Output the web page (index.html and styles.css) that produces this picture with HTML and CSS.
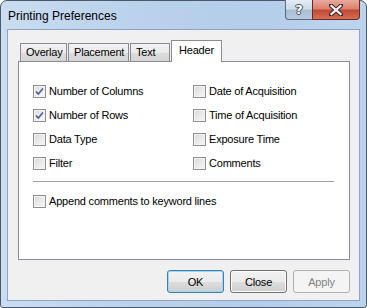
FILE: index.html
```html
<!DOCTYPE html>
<html lang="en">
<head>
    <meta charset="UTF-8">
    <title>Printing Preferences</title>
    <link rel="stylesheet" href="styles.css">
</head>
<body>
    <div class="window">
        <div class="titlebar">
            <span class="title">Printing Preferences</span>
            <div class="caption-buttons">
                <span class="cap-btn help">?</span>
                <span class="cap-btn close">
                    <svg width="14" height="12" viewBox="0 0 14 12">
                        <path d="M2 1.5 L12 10.5 M12 1.5 L2 10.5" stroke="#3a2a2a" stroke-width="4.2" stroke-linecap="square"/>
                        <path d="M2.5 2 L11.5 10 M11.5 2 L2.5 10" stroke="#ffffff" stroke-width="2.2" stroke-linecap="square"/>
                    </svg>
                </span>
            </div>
        </div>

        <div class="client">
            <div class="tabs">
                <div class="tab tab-overlay">Overlay</div>
                <div class="tab tab-placement">Placement</div>
                <div class="tab tab-text">Text</div>
                <div class="tab tab-header active">Header</div>
            </div>

            <div class="panel">
                <div class="options">
                    <label class="check checked"><span class="box"></span>Number of Columns</label>
                    <label class="check"><span class="box"></span>Date of Acquisition</label>
                    <label class="check checked"><span class="box"></span>Number of Rows</label>
                    <label class="check"><span class="box"></span>Time of Acquisition</label>
                    <label class="check"><span class="box"></span>Data Type</label>
                    <label class="check"><span class="box"></span>Exposure Time</label>
                    <label class="check"><span class="box"></span>Filter</label>
                    <label class="check"><span class="box"></span>Comments</label>
                </div>
                <div class="separator"></div>
                <label class="check append"><span class="box"></span>Append comments to keyword lines</label>
            </div>

            <div class="buttons">
                <button class="btn default">OK</button>
                <button class="btn">Close</button>
                <button class="btn disabled">Apply</button>
            </div>
        </div>
    </div>
</body>
</html>
```

FILE: styles.css
```css
:root {
    --client: #f0f0f0;
    --tab-border: #898c95;
    --text: #000000;
}

* {
    margin: 0;
    padding: 0;
    box-sizing: border-box;
}

body {
    width: 367px;
    height: 308px;
    background: #ffffff;
    font-family: 'Liberation Sans', Arial, sans-serif;
    font-size: 11px;
    letter-spacing: -0.2px;
    color: var(--text);
}

.window {
    width: 367px;
    height: 308px;
    border: 1px solid #4a5868;
    border-radius: 7px 7px 3px 3px;
    padding: 0 6px 6px;
    background: linear-gradient(90deg, #c9dcf1 0%, #b9d1ec 40%, #b4cdea 70%, #bdd4ee 100%);
    display: flex;
    flex-direction: column;
}

/* title bar */
.titlebar {
    height: 28px;
    display: flex;
    justify-content: space-between;
    align-items: flex-start;
}

.title {
    font-size: 12px;
    letter-spacing: 0;
    padding: 8px 0 0 1px;
    color: #000000;
}

.caption-buttons {
    display: flex;
    margin-top: -1px;
}

.cap-btn {
    height: 20px;
    display: flex;
    align-items: center;
    justify-content: center;
    border: 1px solid #5a6a80;
    border-top: none;
}

.help {
    width: 27px;
    border-right: none;
    border-radius: 0 0 0 4px;
    background: linear-gradient(180deg, #e4ecf6 0%, #cfdbea 45%, #a9bcd3 55%, #b9cadd 100%);
    font-family: 'DejaVu Sans', sans-serif;
    font-weight: bold;
    font-size: 13px;
    color: #ffffff;
    text-shadow: 0 0 1px #33404f, 1px 0 0 #4a5868, -1px 0 0 #4a5868, 0 1px 0 #4a5868, 0 -1px 0 #4a5868;
}

.close {
    width: 48px;
    border-radius: 0 0 4px 0;
    border-color: #6b2a22;
    background: linear-gradient(180deg, #e9a99c 0%, #d9826f 45%, #c24a32 55%, #d46f58 100%);
}

/* client area */
.client {
    flex: 1;
    border: 1px solid #8ca4c2;
    background: var(--client);
    padding: 10px 8px 0 10px;
    display: flex;
    flex-direction: column;
}

.tabs {
    height: 21px;
    display: flex;
    align-items: flex-end;
    padding-left: 2px;
    gap: 1px;
}

.tab {
    height: 18px;
    border: 1px solid var(--tab-border);
    border-bottom: none;
    background: linear-gradient(180deg, #f2f2f2 0%, #ebebeb 50%, #dddddd 51%, #d4d4d4 100%);
    padding: 2px 0 0 5px;
}

.tab-overlay { width: 47px; }
.tab-placement { width: 61px; }
.tab-text { width: 40px; }

.tab.active {
    width: 51px;
    height: 22px;
    margin-bottom: -1px;
    background: #ffffff;
    position: relative;
    z-index: 1;
    padding: 3px 0 0 7px;
}

.panel {
    width: 332px;
    height: 199px;
    border: 1px solid var(--tab-border);
    background: #ffffff;
    padding: 17px 15px 0 14px;
}

.options {
    display: grid;
    grid-template-columns: 160px 1fr;
    grid-auto-rows: 24px;
}

.check {
    display: flex;
    align-items: center;
    height: 24px;
}

.box {
    width: 13px;
    height: 13px;
    margin-right: 3px;
    border: 1px solid #8e8f8f;
    background: linear-gradient(135deg, #d8d8d8 0%, #e9e9e9 50%, #f8f8f8 100%);
    box-shadow: inset 0 0 0 1px #f4f4f4;
    flex-shrink: 0;
}

.check.checked .box {
    background:
        url("data:image/svg+xml,%3Csvg xmlns='http://www.w3.org/2000/svg' width='11' height='11' viewBox='0 0 11 11'%3E%3Cpath d='M2 5.5 L4.3 8 L9 2.5' fill='none' stroke='%234d6394' stroke-width='1.7'/%3E%3C/svg%3E") no-repeat center,
        linear-gradient(135deg, #dcdcdc 0%, #ececec 50%, #fafafa 100%);
}

.separator {
    width: 301px;
    height: 1px;
    margin-top: 6px;
    background: #a0a0a0;
}

.append {
    margin-top: 7px;
}

/* dialog buttons */
.buttons {
    display: flex;
    justify-content: flex-end;
    gap: 6px;
    margin-top: 10px;
    padding-right: 1px;
}

.btn {
    width: 57px;
    height: 23px;
    font-family: 'Liberation Sans', Arial, sans-serif;
    font-size: 11px;
    letter-spacing: -0.2px;
    color: #000000;
    border: 1px solid #707070;
    border-radius: 3px;
    background: linear-gradient(180deg, #f2f2f2 0%, #ebebeb 50%, #dddddd 51%, #cfcfcf 100%);
    box-shadow: inset 0 0 0 1px #fcfcfc;
}

.btn.default {
    border-color: #3c7fb1;
    box-shadow: inset 0 0 0 1px #9fd8f5;
}

.btn.disabled {
    border-color: #adb2b5;
    background: #f4f4f4;
    box-shadow: none;
    color: #838383;
}
```
